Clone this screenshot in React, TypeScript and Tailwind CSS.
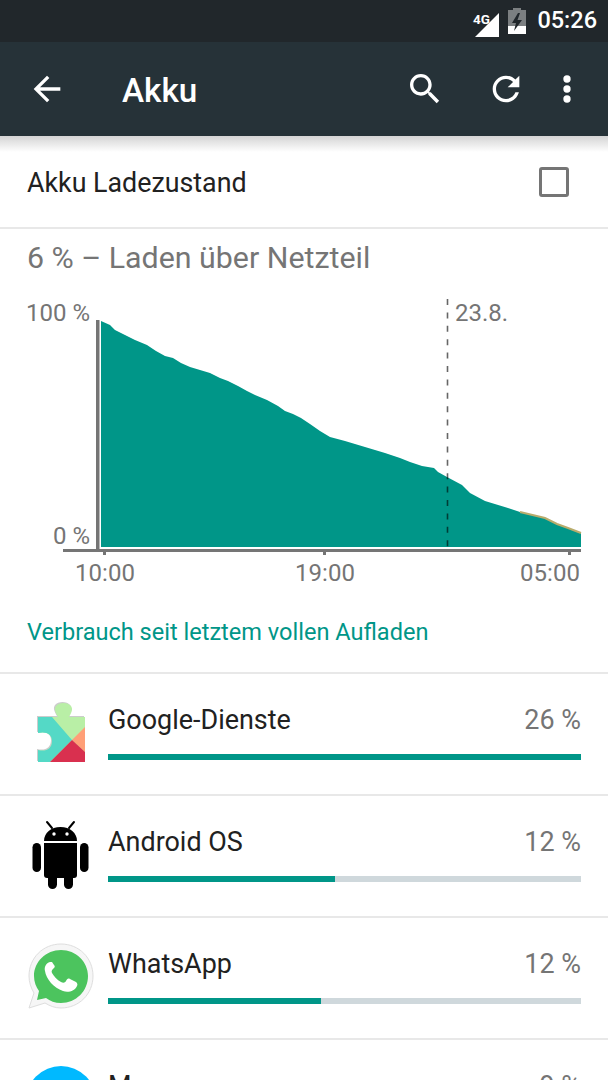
import React from "react";

const font = "font-['Roboto',sans-serif]";

const curve =
  "101,321 110,325 115,330 125,335 135,340 147,345 156,351 165,356 173,358 181,363 190,367 200,370 210,373 220,378 228,381 238,386 247,391 255,395 267,400 278,406 285,411 293,414 301,418 310,424 320,431 330,437 345,441 365,447 385,453 400,458 410,462 422,466 434,468 438,472 447,477 462,485 470,493 485,501 508,508 520,512 545,518 557,524 568,528 581,533";

const apps = [
  { name: "Google-Dienste", pct: "26 %", width: "w-full", icon: "play" },
  { name: "Android OS", pct: "12 %", width: "w-[48%]", icon: "android" },
  { name: "WhatsApp", pct: "12 %", width: "w-[45%]", icon: "whatsapp" },
  { name: "M", pct: "9 %", width: "w-[35%]", icon: "messenger" },
];

const PlayIcon = () => (
  <svg width="72" height="70" viewBox="27 698 72 70" className="block">
    <path d="M38 717H58C55 712 54 709 56 706C59 702 68 702 71 706C73 709 72 712 69 717H85V762H50L38 762V750C46 752 52 749 52 741C52 734 46 731 38 733Z" fill="#9a9a9a" opacity="0.5" transform="translate(-1,-1)" />
    <path d="M38 717H58C55 712 54 709 56 706C59 702 68 702 71 706C73 709 72 712 69 717H85V762H50L38 762V750C46 752 52 749 52 741C52 734 46 731 38 733Z" fill="#b9efa6" />
    <path d="M38 717H52L72 740L50 762H38V750C46 752 52 749 52 741C52 734 46 731 38 733Z" fill="#54d9c6" />
    <path d="M85 727V752L72 740Z" fill="#ff9f77" />
    <path d="M72 740L85 752V762H50Z" fill="#d9304f" />
  </svg>
);

const AndroidIcon = () => (
  <svg width="72" height="70" viewBox="27 820 72 70" fill="#000" className="block">
    <path d="M44 841C44 833 51 827 60.5 827C70 827 77 833 77 841Z" />
    <path d="M52 828L47 822M69 828L74 822" stroke="#000" strokeWidth="2" strokeLinecap="round" />
    <circle cx="54" cy="834" r="1.7" fill="#fff" />
    <circle cx="67" cy="834" r="1.7" fill="#fff" />
    <path d="M44 843H77V875C77 877 76 878 74 878H47C45 878 44 877 44 875Z" />
    <rect x="32.5" y="843" width="8.5" height="29" rx="4.25" />
    <rect x="80" y="843" width="8.5" height="29" rx="4.25" />
    <rect x="48" y="870" width="9" height="19" rx="4.5" />
    <rect x="64" y="870" width="9" height="19" rx="4.5" />
  </svg>
);

const WhatsAppIcon = () => (
  <svg width="72" height="70" viewBox="27 942 72 70" className="block">
    <path d="M61 944C43 944 29 958 29 976C29 982 31 988 34 993L29 1008L45 1003C50 1006 55 1008 61 1008C79 1008 93 994 93 976C93 958 79 944 61 944Z" fill="#f6f6f6" stroke="#dedede" strokeWidth="1" />
    <path d="M61 950C46 950 34 962 34 976C34 982 36 987 39 991L37 1000L46 998C50 1001 55 1003 61 1003C76 1003 88 991 88 976C88 962 76 950 61 950Z" fill="#4cc45e" />
    <path d="M50 962C46 963 44 967 45 971C46 979 54 988 63 991C68 993 75 991 77 986C78 984 77 983 76 982L70 979C68 978 67 979 66 981C65 983 63 983 61 982C57 980 54 976 52 973C51 971 52 970 54 968C55 967 55 966 54 965L52 962C51 962 51 962 50 962Z" fill="#fff" />
  </svg>
);

const AppIcon = ({ kind }: { kind: string }) => {
  if (kind === "play") return <PlayIcon />;
  if (kind === "android") return <AndroidIcon />;
  if (kind === "whatsapp") return <WhatsAppIcon />;
  return <div className="w-[70px] h-[70px] mt-[2px] -ml-[1px] rounded-full bg-[#00b9ff]" />;
};

const BatteryChart = () => (
  <svg width="608" height="312" viewBox="0 286 608 312" className="block">
    <polygon points={`101,547 ${curve} 581,547`} fill="#009688" />
    <polyline points="520,512 545,518 557,524 568,528 581,533" fill="none" stroke="#b8ac6c" strokeWidth="2" />
    <rect x="96" y="320" width="3.5" height="231" fill="#757575" />
    <rect x="63" y="549" width="518" height="3" fill="#757575" />
    <rect x="103" y="552" width="3" height="3" fill="#757575" />
    <rect x="323" y="552" width="3" height="3" fill="#757575" />
    <rect x="568" y="552" width="3" height="3" fill="#757575" />
    <line x1="447.5" y1="299" x2="447.5" y2="547" stroke="#000" strokeOpacity="0.6" strokeWidth="1.6" strokeDasharray="6 7.4" />
    <g fontFamily="Roboto" fontSize="24" fill="#757575">
      <text x="90" y="321" textAnchor="end">100 %</text>
      <text x="90" y="544" textAnchor="end">0 %</text>
      <text x="455" y="321">23.8.</text>
      <text x="105" y="581" textAnchor="middle">10:00</text>
      <text x="325" y="581" textAnchor="middle">19:00</text>
      <text x="550" y="581" textAnchor="middle">05:00</text>
    </g>
  </svg>
);

const App: React.FC = () => {
  return (
    <div className={`${font} w-[608px] h-[1080px] overflow-hidden bg-white`}>
      {/* Status bar */}
      <div className="h-[42px] bg-[#21272b] flex items-center justify-end pr-[11px]">
        <svg width="28" height="34" viewBox="0 0 28 34" className="mr-[8px]">
          <path d="M27 9V33H3Z" fill="#fff" />
          <text x="1" y="20" fontFamily="Roboto" fontWeight="700" fontSize="13.5" fill="#fff">4G</text>
        </svg>
        <svg width="18" height="26" viewBox="0 0 18 26" className="mr-[11px]">
          <path d="M5 0H13V2H18V26H0V2H5Z" fill="#7b7f81" />
          <path d="M0 18H18V26H0Z" fill="#fff" />
          <path d="M10 5L4 15H8L6 23L14 12H9.5L12 5Z" fill="#21272b" />
        </svg>
        <span className="text-[23.5px] font-medium leading-none text-white">05:26</span>
      </div>

      {/* App bar */}
      <div className="relative h-[94px] bg-[#263238] flex items-center">
        <svg width="40" height="40" viewBox="0 0 24 24" fill="#fff" className="ml-[27px]">
          <path d="M20 11H7.83l5.59-5.59L12 4l-8 8 8 8 1.41-1.41L7.83 13H20v-2z" />
        </svg>
        <span className="ml-[55px] pt-[3px] text-[33.3px] font-medium text-white">Akku</span>
        <svg width="40" height="40" viewBox="0 0 24 24" fill="#fff" className="ml-auto">
          <path d="M15.5 14h-.79l-.28-.27C15.41 12.59 16 11.11 16 9.5 16 5.91 13.09 3 9.5 3S3 5.91 3 9.5 5.91 16 9.5 16c1.61 0 3.09-.59 4.23-1.57l.27.28v.79l5 4.99L20.49 19l-4.99-5zm-6 0C7.01 14 5 11.99 5 9.5S7.01 5 9.5 5 14 7.01 14 9.5 11.99 14 9.5 14z" />
        </svg>
        <svg width="40" height="40" viewBox="0 0 24 24" fill="#fff" className="ml-[41px]">
          <path d="M17.65 6.35C16.2 4.9 14.21 4 12 4c-4.42 0-7.99 3.58-7.99 8s3.57 8 7.99 8c3.73 0 6.84-2.55 7.73-6h-2.08c-.82 2.33-3.04 4-5.65 4-3.31 0-6-2.69-6-6s2.69-6 6-6c1.66 0 3.14.69 4.22 1.78L13 11h7V4l-2.35 2.35z" />
        </svg>
        <svg width="40" height="40" viewBox="0 0 24 24" fill="#fff" className="ml-[21px] mr-[21px]">
          <circle cx="12" cy="6" r="2.2" />
          <circle cx="12" cy="12" r="2.2" />
          <circle cx="12" cy="18" r="2.2" />
        </svg>
        <div className="absolute left-0 right-0 top-full h-[16px] bg-gradient-to-b from-[#d4d4d4] to-white" />
      </div>

      {/* Battery saver toggle */}
      <div className="h-[93px] border-b-2 border-[#e8e8e8] flex items-center justify-between pl-[27px] pr-[39px]">
        <span className="mt-[4px] text-[26.8px] text-[#212121]">Akku Ladezustand</span>
        <div className="w-[30px] h-[30px] rounded-[3px] border-[3px] border-[#757575]" />
      </div>

      <div className="pl-[27px] pt-[11px] h-[57px] text-[30.35px] leading-[36px] text-[#757575]">
        6 % – Laden über Netzteil
      </div>

      <BatteryChart />

      <div className="h-[74px] pl-[27px] pt-[19px] text-[23.55px] leading-[30px] text-[#009688]">
        Verbrauch seit letztem vollen Aufladen
      </div>

      {/* App usage list */}
      {apps.map((app) => (
        <div key={app.name} className="h-[122px] border-t-2 border-[#e8e8e8] flex pl-[27px] pr-[27px]">
          <div className="w-[81px] pt-[24px] shrink-0">
            <AppIcon kind={app.icon} />
          </div>
          <div className="flex-1 pt-[28px]">
            <div className="flex justify-between items-center h-[36px] text-[26.95px]">
              <span className="text-[#212121]">{app.name}</span>
              <span className="text-[#757575]">{app.pct}</span>
            </div>
            <div className="mt-[16px] h-[6px] bg-[#cfd8dc]">
              <div className={`h-full bg-[#009688] ${app.width}`} />
            </div>
          </div>
        </div>
      ))}
    </div>
  );
};

export default App;
